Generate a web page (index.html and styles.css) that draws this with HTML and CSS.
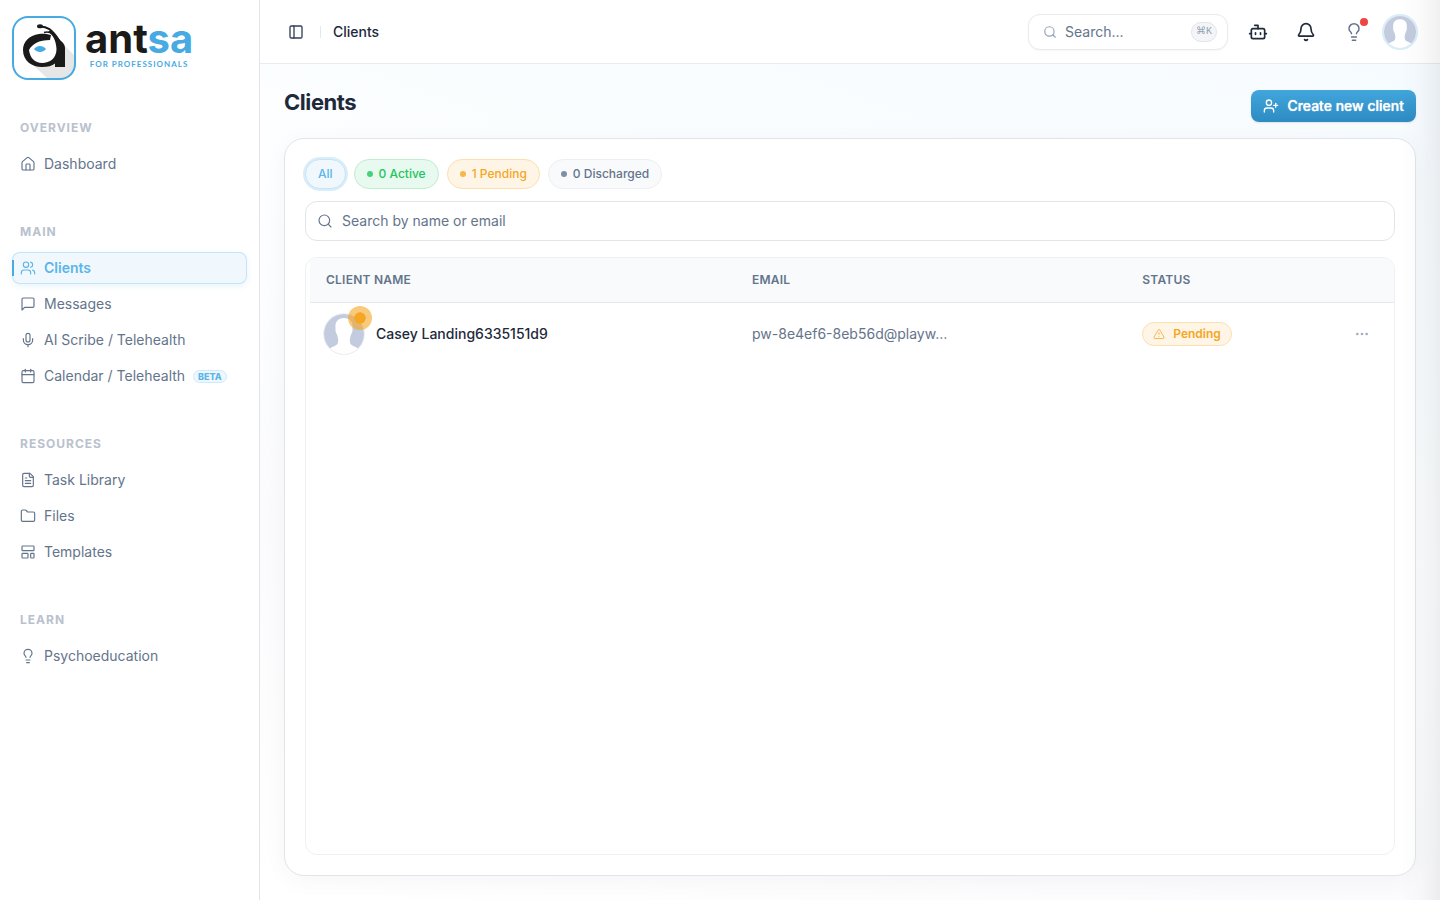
FILE: index.html
```html
<!DOCTYPE html>
<html lang="en">
<head>
  <meta charset="UTF-8">
  <meta name="viewport" content="width=device-width, initial-scale=1.0">
  <title>Clients - antsa</title>
  <link rel="stylesheet" href="styles.css">
</head>
<body>

<!-- Shared icons -->
<svg class="sprite" aria-hidden="true">
  <symbol id="icon-home" viewBox="0 0 24 24"><path d="M15 21v-8a1 1 0 0 0-1-1h-4a1 1 0 0 0-1 1v8"/><path d="M3 10a2 2 0 0 1 .709-1.528l7-5.999a2 2 0 0 1 2.582 0l7 5.999A2 2 0 0 1 21 10v9a2 2 0 0 1-2 2H5a2 2 0 0 1-2-2z"/></symbol>
  <symbol id="icon-users" viewBox="0 0 24 24"><path d="M16 21v-2a4 4 0 0 0-4-4H6a4 4 0 0 0-4 4v2"/><circle cx="9" cy="7" r="4"/><path d="M22 21v-2a4 4 0 0 0-3-3.870"/><path d="M16 3.130a4 4 0 0 1 0 7.750"/></symbol>
  <symbol id="icon-message" viewBox="0 0 24 24"><path d="M21 15a2 2 0 0 1-2 2H7l-4 4V5a2 2 0 0 1 2-2h14a2 2 0 0 1 2 2z"/></symbol>
  <symbol id="icon-mic" viewBox="0 0 24 24"><path d="M12 2a3 3 0 0 0-3 3v7a3 3 0 0 0 6 0V5a3 3 0 0 0-3-3Z"/><path d="M19 10v2a7 7 0 0 1-14 0v-2"/><path d="M12 19v3"/></symbol>
  <symbol id="icon-calendar" viewBox="0 0 24 24"><path d="M8 2v4"/><path d="M16 2v4"/><rect width="18" height="18" x="3" y="4" rx="2"/><path d="M3 10h18"/></symbol>
  <symbol id="icon-file" viewBox="0 0 24 24"><path d="M15 2H6a2 2 0 0 0-2 2v16a2 2 0 0 0 2 2h12a2 2 0 0 0 2-2V7Z"/><path d="M14 2v4a2 2 0 0 0 2 2h4"/><path d="M10 9H8"/><path d="M16 13H8"/><path d="M16 17H8"/></symbol>
  <symbol id="icon-folder" viewBox="0 0 24 24"><path d="M20 20a2 2 0 0 0 2-2V8a2 2 0 0 0-2-2h-7.900a2 2 0 0 1-1.690-.900L9.600 3.900A2 2 0 0 0 7.930 3H4a2 2 0 0 0-2 2v13a2 2 0 0 0 2 2Z"/></symbol>
  <symbol id="icon-template" viewBox="0 0 24 24"><rect width="18" height="7" x="3" y="3" rx="1"/><rect width="9" height="7" x="3" y="14" rx="1"/><rect width="5" height="7" x="16" y="14" rx="1"/></symbol>
  <symbol id="icon-bulb" viewBox="0 0 24 24"><path d="M15 14c.2-1 .7-1.700 1.500-2.500 1-.900 1.500-2.200 1.500-3.500A6 6 0 0 0 6 8c0 1 .2 2.200 1.500 3.500.7.7 1.300 1.500 1.500 2.500"/><path d="M9 18h6"/><path d="M10 22h4"/></symbol>
  <symbol id="icon-panel" viewBox="0 0 24 24"><rect width="18" height="18" x="3" y="3" rx="2"/><path d="M9 3v18"/></symbol>
  <symbol id="icon-search" viewBox="0 0 24 24"><circle cx="11" cy="11" r="8"/><path d="m21 21-4.300-4.300"/></symbol>
  <symbol id="icon-bot" viewBox="0 0 24 24"><path d="M12 8V4H8"/><rect width="16" height="12" x="4" y="8" rx="2"/><path d="M2 14h2"/><path d="M20 14h2"/><path d="M15 13v2"/><path d="M9 13v2"/></symbol>
  <symbol id="icon-bell" viewBox="0 0 24 24"><path d="M10.268 21a2 2 0 0 0 3.464 0"/><path d="M3.262 15.326A1 1 0 0 0 4 17h16a1 1 0 0 0 .740-1.673C19.410 13.956 18 12.499 18 8A6 6 0 0 0 6 8c0 4.499-1.411 5.956-2.738 7.326"/></symbol>
  <symbol id="icon-user-plus" viewBox="0 0 24 24"><path d="M16 21v-2a4 4 0 0 0-4-4H6a4 4 0 0 0-4 4v2"/><circle cx="9" cy="7" r="4"/><path d="M19 8v6"/><path d="M22 11h-6"/></symbol>
  <symbol id="icon-warning" viewBox="0 0 24 24"><path d="m21.730 18-8-14a2 2 0 0 0-3.480 0l-8 14A2 2 0 0 0 4 21h16a2 2 0 0 0 1.730-3"/><path d="M12 9v4"/><path d="M12 17h.01"/></symbol>
  <symbol id="icon-more" viewBox="0 0 24 24"><circle cx="12" cy="12" r="1"/><circle cx="19" cy="12" r="1"/><circle cx="5" cy="12" r="1"/></symbol>
  <symbol id="icon-person" viewBox="0 0 40 40">
    <rect width="40" height="40" fill="#c3cbdf"/>
    <path fill="#fff" d="M20 4c-6 0-9 4-8.500 9 .1 2-.3 3 .3 5 .4 1.500 1.200 2 1.500 3.500.5 2.500 1.200 3.500.7 7C13.500 32 9 32 5 35v5h30v-5c-4-3-8.500-3-9-6.500-.5-3.500.2-4.500.7-7 .3-1.500 1.100-2 1.500-3.500.6-2 .2-3 .3-5C29 8 26 4 20 4z"/>
  </symbol>
</svg>

<div class="app">

  <!-- Sidebar -->
  <aside class="sidebar">
    <a href="#" class="logo">
      <svg class="logo-mark" viewBox="0 0 64 64" aria-hidden="true">
        <rect x="1" y="1" width="62" height="62" rx="15" fill="#fff"/>
        <path d="M53 30 63 40v9q0 14-14 14H36L20 48l28-4z" fill="#e6e6e6"/>
        <ellipse cx="31" cy="35" rx="14" ry="13" fill="#fff"/>
        <path fill="#1a1a1a" d="M39 19C34 17.500 30 17.500 27 18 17 19.500 11 26 11 34c0 11 9 17 19 17 6 0 10-1 13-3.500V51h10V32c0-4-3-6-5-8-3-4-6-7-9-9.500l-3 1c5 3.500 8 8.500 8.500 17.500 0 9-6.500 14-14.500 14-7 0-12-5-13-13 3-6 10-10 21-10z"/>
        <path d="M27 10.500c8-.5 13 3 20 14" fill="none" stroke="#1a1a1a" stroke-width="2"/>
        <path d="M32 16.500c3-1 6-.5 9 2" fill="none" stroke="#1a1a1a" stroke-width="1.500"/>
        <ellipse cx="28" cy="10.300" rx="3" ry="2" fill="#1a1a1a"/>
        <path d="M22 33c3-4 9-4 12 0-3 4-9 4-12 0z" fill="#48aae2"/>
        <rect x="1" y="1" width="62" height="62" rx="15" fill="none" stroke="#48aae2" stroke-width="2"/>
      </svg>
      <span class="logo-text">
        <span class="logo-name">ant<span class="logo-accent">sa</span></span>
        <span class="logo-tagline">FOR PROFESSIONALS</span>
      </span>
    </a>

    <nav class="nav">
      <section class="nav-section">
        <h2 class="nav-label">OVERVIEW</h2>
        <a href="#" class="nav-item"><svg class="icon"><use href="#icon-home"/></svg>Dashboard</a>
      </section>

      <section class="nav-section">
        <h2 class="nav-label">MAIN</h2>
        <a href="#" class="nav-item active" aria-current="page"><svg class="icon"><use href="#icon-users"/></svg>Clients</a>
        <a href="#" class="nav-item"><svg class="icon"><use href="#icon-message"/></svg>Messages</a>
        <a href="#" class="nav-item"><svg class="icon"><use href="#icon-mic"/></svg>AI Scribe / Telehealth</a>
        <a href="#" class="nav-item"><svg class="icon"><use href="#icon-calendar"/></svg>Calendar / Telehealth<span class="beta">BETA</span></a>
      </section>

      <section class="nav-section">
        <h2 class="nav-label">RESOURCES</h2>
        <a href="#" class="nav-item"><svg class="icon"><use href="#icon-file"/></svg>Task Library</a>
        <a href="#" class="nav-item"><svg class="icon"><use href="#icon-folder"/></svg>Files</a>
        <a href="#" class="nav-item"><svg class="icon"><use href="#icon-template"/></svg>Templates</a>
      </section>

      <section class="nav-section">
        <h2 class="nav-label">LEARN</h2>
        <a href="#" class="nav-item"><svg class="icon"><use href="#icon-bulb"/></svg>Psychoeducation</a>
      </section>
    </nav>
  </aside>

  <div class="content">

    <!-- Top bar -->
    <header class="topbar">
      <button type="button" class="toggle" aria-label="Toggle sidebar"><svg class="icon"><use href="#icon-panel"/></svg></button>
      <span class="divider"></span>
      <span class="crumb">Clients</span>

      <div class="topbar-actions">
        <label class="quick-search">
          <svg class="icon"><use href="#icon-search"/></svg>
          <input type="text" placeholder="Search..." aria-label="Search">
          <kbd>⌘K</kbd>
        </label>
        <button type="button" class="icon-button" aria-label="Assistant"><svg class="icon"><use href="#icon-bot"/></svg></button>
        <button type="button" class="icon-button" aria-label="Notifications"><svg class="icon"><use href="#icon-bell"/></svg></button>
        <button type="button" class="icon-button muted" aria-label="Tips"><svg class="icon"><use href="#icon-bulb"/></svg><span class="alert-dot"></span></button>
        <button type="button" class="profile" aria-label="Account"><svg><use href="#icon-person"/></svg></button>
      </div>
    </header>

    <main class="page">
      <div class="page-header">
        <h1>Clients</h1>
        <button type="button" class="create-button"><svg class="icon"><use href="#icon-user-plus"/></svg>Create new client</button>
      </div>

      <div class="card">
        <div class="filters">
          <button type="button" class="filter all">All</button>
          <button type="button" class="filter green"><span class="dot"></span>0 Active</button>
          <button type="button" class="filter orange"><span class="dot"></span>1 Pending</button>
          <button type="button" class="filter gray"><span class="dot"></span>0 Discharged</button>
        </div>

        <label class="client-search">
          <svg class="icon"><use href="#icon-search"/></svg>
          <input type="text" placeholder="Search by name or email" aria-label="Search by name or email">
        </label>

        <!-- Client list -->
        <div class="table-wrap">
          <table>
            <thead>
              <tr>
                <th class="col-name">CLIENT NAME</th>
                <th class="col-email">EMAIL</th>
                <th class="col-status">STATUS</th>
                <th class="col-menu"></th>
              </tr>
            </thead>
            <tbody>
              <tr>
                <td>
                  <div class="client">
                    <span class="avatar"><svg><use href="#icon-person"/></svg><span class="avatar-badge"></span></span>
                    <span class="client-name">Casey Landing6335151d9</span>
                  </div>
                </td>
                <td class="email">pw-8e4ef6-8eb56d@playw…</td>
                <td><span class="status"><svg class="icon"><use href="#icon-warning"/></svg>Pending</span></td>
                <td class="col-menu"><button type="button" class="row-menu" aria-label="Client options"><svg class="icon"><use href="#icon-more"/></svg></button></td>
              </tr>
            </tbody>
          </table>
        </div>
      </div>
    </main>
  </div>
</div>

</body>
</html>
```
FILE: styles.css
```css
* {
  box-sizing: border-box;
}

body {
  margin: 0;
  font-family: Inter, "Liberation Sans", sans-serif;
  font-size: 14px;
  line-height: 20px;
  color: #1e293b;
  background-color: #fff;
}

button,
input,
kbd {
  font: inherit;
  color: inherit;
}

button {
  padding: 0;
  border: none;
  background: none;
  cursor: pointer;
}

.sprite {
  display: none;
}

.icon {
  width: 16px;
  height: 16px;
  flex-shrink: 0;
  fill: none;
  stroke: currentColor;
  stroke-width: 2;
  stroke-linecap: round;
  stroke-linejoin: round;
}

.app {
  display: flex;
  min-height: 100vh;
}

/* soft shade along the right edge of the window */
.app::after {
  content: "";
  position: fixed;
  top: 0;
  right: 0;
  bottom: 0;
  width: 40px;
  background: linear-gradient(to right, rgba(0, 0, 0, 0), rgba(0, 0, 0, 0.015) 50%, rgba(0, 0, 0, 0.06));
  pointer-events: none;
}

/* Sidebar */
.sidebar {
  width: 260px;
  flex-shrink: 0;
  padding: 16px 12px;
  border-right: 1px solid #e2e4e9;
}

.logo {
  display: flex;
  gap: 9px;
  text-decoration: none;
}

.logo-mark {
  width: 64px;
  height: 64px;
}

.logo-text {
  display: flex;
  flex-direction: column;
  align-items: center;
  padding-top: 4px;
}

.logo-name {
  font-size: 40px;
  line-height: 38px;
  font-weight: 700;
  color: #1a1a1a;
}

.logo-accent,
.logo-tagline {
  color: #48aae2;
}

.logo-tagline {
  font-family: Lato, sans-serif;
  font-size: 8px;
  line-height: 12px;
  font-weight: 700;
  letter-spacing: 1px;
}

.nav {
  display: flex;
  flex-direction: column;
  gap: 36px;
  padding-top: 32px;
}

.nav-section {
  display: flex;
  flex-direction: column;
  gap: 4px;
}

.nav-label {
  margin: 0;
  padding: 0 8px;
  font-size: 12px;
  line-height: 32px;
  font-weight: 700;
  letter-spacing: 1px;
  color: #b9c1ce;
}

.nav-item {
  display: flex;
  align-items: center;
  gap: 8px;
  height: 32px;
  padding: 0 8px;
  border-radius: 8px;
  color: #64748b;
  text-decoration: none;
}

.nav-item .icon {
  stroke-width: 1.75;
}

.nav-item.active {
  position: relative;
  background-color: #f0f8fe;
  box-shadow: inset 0 0 0 1px #c4e5f6, 0 2px 6px rgba(88, 180, 230, 0.15);
  color: #5bb5e8;
  font-weight: 600;
}

.nav-item.active::before {
  content: "";
  position: absolute;
  left: 0;
  top: 8px;
  bottom: 8px;
  width: 2px;
  background-color: #48aae2;
}

.beta {
  padding: 0 4px;
  border: 1px solid #cfeaf8;
  border-radius: 8px;
  background-color: #edf7fd;
  font-size: 9px;
  line-height: 11px;
  font-weight: 800;
  color: #5bb5e8;
}

/* Top bar */
.content {
  flex: 1;
  min-width: 0;
  display: flex;
  flex-direction: column;
}

.topbar {
  display: flex;
  align-items: center;
  height: 64px;
  padding: 0 24px 0 28px;
  border-bottom: 1px solid #e8eaed;
}

.toggle {
  display: flex;
  color: #334155;
}

.divider {
  width: 1px;
  height: 12px;
  margin: 0 12px 0 16px;
  background-color: #e2e8f0;
}

.crumb {
  font-weight: 500;
}

.topbar-actions {
  display: flex;
  align-items: center;
  gap: 12px;
  margin-left: auto;
}

.quick-search {
  display: flex;
  align-items: center;
  gap: 8px;
  width: 200px;
  height: 36px;
  padding: 0 10px 0 14px;
  border: 1px solid #e8eaee;
  border-radius: 12px;
  background-color: #fff;
  box-shadow: 0 1px 2px rgba(0, 0, 0, 0.04);
}

.quick-search .icon {
  width: 14px;
  height: 14px;
  color: #94a3b8;
}

.quick-search input,
.client-search input {
  flex: 1;
  min-width: 0;
  padding: 0;
  border: none;
  outline: none;
  background: none;
}

input::placeholder {
  color: #64748b;
  opacity: 1;
}

.quick-search kbd {
  padding: 0 4px;
  border: 1px solid #e2e5ea;
  border-radius: 10px;
  background-color: #f3f5f7;
  font-family: "Liberation Mono", "DejaVu Sans", monospace;
  font-size: 10px;
  line-height: 18px;
  color: #94a3b8;
}

.icon-button {
  position: relative;
  display: flex;
  align-items: center;
  justify-content: center;
  width: 36px;
  height: 36px;
}

.icon-button .icon {
  width: 20px;
  height: 20px;
}

.icon-button.muted {
  color: #64748b;
}

.icon-button.muted .icon {
  stroke-width: 1.75;
}

.alert-dot {
  position: absolute;
  top: 4px;
  right: 4px;
  width: 8px;
  height: 8px;
  border-radius: 50%;
  background-color: #ef4444;
}

.profile {
  width: 32px;
  height: 32px;
  border-radius: 50%;
  overflow: hidden;
  box-shadow: 0 0 0 2px #d8edf8;
}

.profile svg {
  display: block;
  width: 32px;
  height: 32px;
}

/* Page */
.page {
  flex: 1;
  display: flex;
  flex-direction: column;
  gap: 16px;
  padding: 24px;
  background: linear-gradient(200deg, #f6fbff 0%, #fcfeff 40%, #fbfbfd 70%, #fff 100%);
}

.page-header {
  display: flex;
  justify-content: space-between;
  height: 34px;
}

.page-header h1 {
  margin: 0;
  font-size: 22px;
  line-height: 28px;
  font-weight: 700;
  letter-spacing: -0.02em;
}

.create-button {
  display: flex;
  align-items: center;
  align-self: flex-end;
  gap: 8px;
  height: 32px;
  padding: 0 12px;
  border-radius: 8px;
  background: linear-gradient(#41a6dc, #2d8bc2);
  box-shadow: 0 1px 2px rgba(0, 0, 0, 0.1);
  font-weight: 500;
  text-shadow: 0 0 1px #fff;
  color: #fff;
}

.card {
  flex: 1;
  display: flex;
  flex-direction: column;
  padding: 20px;
  border: 1px solid #e1e5eb;
  border-radius: 20px;
  background-color: #fff;
  box-shadow: 0 4px 24px rgba(15, 23, 42, 0.04);
}

.filters {
  display: flex;
  gap: 8px;
}

.filter {
  display: flex;
  align-items: center;
  gap: 6px;
  height: 30px;
  padding: 0 12px;
  border: 1px solid;
  border-radius: 15px;
  font-size: 12px;
  font-weight: 500;
}

.dot {
  width: 6px;
  height: 6px;
  border-radius: 50%;
  background-color: currentColor;
  opacity: 0.8;
}

.filter.all {
  border-color: #c4e5f6;
  background-color: #f0f8fe;
  box-shadow: 0 0 0 2px #daeefa;
  color: #5bb5e8;
}

.filter.green {
  border-color: #bdeed0;
  background-color: #e8f9ef;
  color: #22c55e;
}

.filter.orange {
  border-color: #fce0b0;
  background-color: #fef5e7;
  color: #f5a623;
}

.filter.gray {
  border-color: #eceff3;
  background-color: #f8fafc;
  color: #64748b;
}

.client-search {
  display: flex;
  align-items: center;
  gap: 9px;
  height: 40px;
  margin: 12px 0 16px;
  padding: 0 11px;
  border: 1px solid #e2e4ea;
  border-radius: 12px;
  color: #64748b;
}

.client-search .icon {
  stroke-width: 1.75;
}

.table-wrap {
  flex: 1;
  padding-left: 4px;
  border: 1px solid #eef0f3;
  border-radius: 12px;
  overflow: hidden;
}

table {
  width: 100%;
  border-collapse: collapse;
  table-layout: fixed;
  text-align: left;
}

th {
  height: 44px;
  padding: 0 16px;
  border-bottom: 1px solid #e2e8f0;
  background-color: #f8fafc;
  font-size: 12px;
  font-weight: 600;
  letter-spacing: 0.02em;
  color: #64748b;
}

td {
  height: 64px;
  padding: 0 16px;
}

.col-name {
  width: 39.3%;
}

.col-email {
  width: 36%;
}

.col-menu {
  padding-right: 24px;
}

.client {
  display: flex;
  align-items: center;
  gap: 12px;
  margin-left: -2px;
}

.avatar {
  position: relative;
  width: 40px;
  height: 40px;
}

.avatar svg {
  display: block;
  width: 40px;
  height: 40px;
  border-radius: 50%;
  box-shadow: 0 0 0 1px #eef0f4;
}

.avatar-badge {
  position: absolute;
  top: -8px;
  right: -8px;
  width: 24px;
  height: 24px;
  border: 6px solid rgba(245, 166, 35, 0.6);
  border-radius: 50%;
  background-color: #f5a623;
  background-clip: padding-box;
}

.client-name {
  font-weight: 500;
}

.email {
  color: #64748b;
}

.status {
  display: inline-flex;
  align-items: center;
  gap: 8px;
  height: 24px;
  padding: 0 10px;
  border: 1px solid #fce0b0;
  border-radius: 12px;
  background-color: #fef5e7;
  font-size: 12px;
  font-weight: 600;
  color: #f5a623;
}

.status .icon {
  width: 12px;
  height: 12px;
  stroke-width: 1.5;
}

.row-menu {
  display: flex;
  margin-left: auto;
  color: #a3adbc;
}
```
